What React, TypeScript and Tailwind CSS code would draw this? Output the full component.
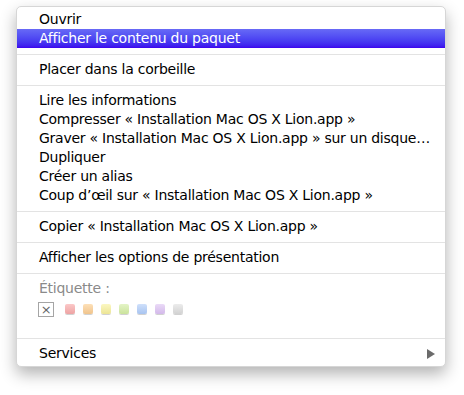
const items1 = ['Lire les informations', 'Compresser « Installation Mac OS X Lion.app »', 'Graver « Installation Mac OS X Lion.app » sur un disque…', 'Dupliquer', 'Créer un alias', 'Coup d’œil sur « Installation Mac OS X Lion.app »'];

const swatches = [
    'from-[#fbc8c8] to-[#eda3a3]',
    'from-[#fde0b8] to-[#f0c48c]',
    'from-[#fbf7c2] to-[#ece595]',
    'from-[#e4f4c6] to-[#cbe39c]',
    'from-[#cfe0fb] to-[#a8c4f0]',
    'from-[#eadaf7] to-[#d3b9ea]',
    'from-[#ececec] to-[#d2d2d2]',
];

const Row = ({ children, active }: { children: React.ReactNode; active?: boolean }) => (
    <div
        className={`h-[19px] pl-[22px] pr-4 leading-[19px] whitespace-nowrap ${
            active ? 'bg-gradient-to-b from-[#6869f6] to-[#3c00ee] text-white' : 'text-black'
        }`}
    >
        {children}
    </div>
);

const Sep = () => (
    <div className="h-3 flex items-center">
        <div className="h-px w-full bg-[#e3e3e3]" />
    </div>
);

export default function App() {
    return (
        <div className="w-[464px] h-[395px] bg-white pt-[6px] pl-4" style={{ fontFamily: '"DejaVu Sans", "Liberation Sans", sans-serif' }}>
            <div className="w-[430px] bg-white rounded-[5px] border border-[#d6d6d6] shadow-[0_7px_16px_rgba(0,0,0,0.3)] py-[3px] text-[14px] tracking-[-0.25px]">
                <Row>Ouvrir</Row>
                <Row active>Afficher le contenu du paquet</Row>
                <Sep />
                <Row>Placer dans la corbeille</Row>
                <Sep />
                {items1.map(t => (
                    <Row key={t}>{t}</Row>
                ))}
                <Sep />
                <Row>Copier « Installation Mac OS X Lion.app »</Row>
                <Sep />
                <Row>Afficher les options de présentation</Row>
                <Sep />
                <div className="h-[19px] pl-[22px] leading-[19px] text-[#8a8a8a]">Étiquette :</div>
                <div className="h-[34px] pl-[21px] pt-[4px] flex items-start gap-[8px]">
                    <div className="w-4 h-[15px] border border-[#a5a5a5] bg-white flex items-center justify-center text-[#666] text-[13px] leading-none mr-[3px]">
                        ×
                    </div>
                    {swatches.map(s => (
                        <div key={s} className={`w-[10px] h-[10px] mt-[2px] rounded-[2px] bg-gradient-to-b ${s} shadow-[0_1px_0_rgba(0,0,0,0.18)]`} />
                    ))}
                </div>
                <Sep />
                <div className="h-[19px] pl-[22px] pr-[10px] leading-[19px] flex items-center justify-between">
                    <span>Services</span>
                    <svg width="8" height="10" viewBox="0 0 8 10">
                        <path d="M0 0 L8 5 L0 10 Z" fill="#6b6b6b" />
                    </svg>
                </div>
            </div>
        </div>
    );
}
